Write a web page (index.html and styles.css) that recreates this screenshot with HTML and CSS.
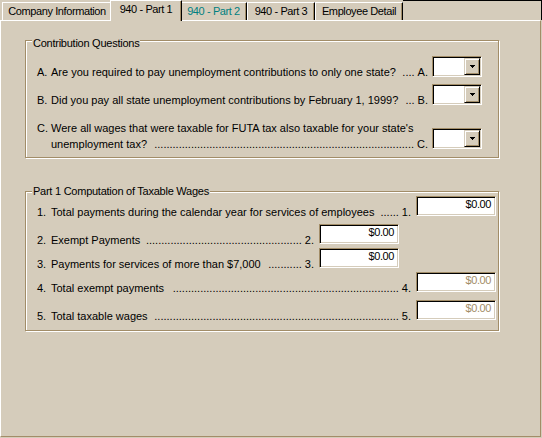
FILE: index.html
```html
<!DOCTYPE html>
<html>
<head>
<meta charset="utf-8">
<link rel="stylesheet" href="styles.css">
</head>
<body>
<div class="window">
  <div class="tabs">
    <div class="tab w1">Company Information</div>
    <div class="tab sel w2">940 - Part 1</div>
    <div class="tab hot w3">940 - Part 2</div>
    <div class="tab w4">940 - Part 3</div>
    <div class="tab w5">Employee Detail</div>
    <div class="filler"></div>
  </div>
  <div class="panel">
    <div class="group g1">
      <div class="legend">Contribution Questions</div>
      <div class="row ra">
        <span class="num t">A.</span>
        <div class="q t"><span>Are you required to pay unemployment contributions to only one state?</span><span class="lead"><span>....</span></span></div>
        <span class="let t">A.</span>
        <div class="combo"><div class="field"></div><div class="btn"><svg width="5" height="3" viewBox="0 0 5 3"><rect x="0" y="0" width="5" height="1"/><rect x="1" y="1" width="3" height="1"/><rect x="2" y="2" width="1" height="1"/></svg></div></div>
      </div>
      <div class="row rb">
        <span class="num t">B.</span>
        <div class="q t"><span>Did you pay all state unemployment contributions by February 1, 1999?</span><span class="lead"><span>...</span></span></div>
        <span class="let t">B.</span>
        <div class="combo"><div class="field"></div><div class="btn"><svg width="5" height="3" viewBox="0 0 5 3"><rect x="0" y="0" width="5" height="1"/><rect x="1" y="1" width="3" height="1"/><rect x="2" y="2" width="1" height="1"/></svg></div></div>
      </div>
      <div class="row rc">
        <span class="num t top">C.</span>
        <div class="q t col">
          <div>Were all wages that were taxable for FUTA tax also taxable for your state's</div>
          <div class="line"><span>unemployment tax?</span><span class="lead"><span>.....................................................................................</span></span></div>
        </div>
        <span class="let t">C.</span>
        <div class="combo"><div class="field"></div><div class="btn"><svg width="5" height="3" viewBox="0 0 5 3"><rect x="0" y="0" width="5" height="1"/><rect x="1" y="1" width="3" height="1"/><rect x="2" y="2" width="1" height="1"/></svg></div></div>
      </div>
    </div>

    <div class="group g2">
      <div class="legend">Part 1 Computation of Taxable Wages</div>
      <div class="row r1">
        <span class="num t">1.</span>
        <div class="q t"><span>Total payments during the calendar year for services of employees</span><span class="lead"><span>......</span></span></div>
        <span class="let t">1.</span>
        <div class="edit">$0.00</div>
      </div>
      <div class="row r2 short">
        <span class="num t">2.</span>
        <div class="q t"><span>Exempt Payments</span><span class="lead"><span>...................................................</span></span></div>
        <span class="let t">2.</span>
        <div class="edit">$0.00</div>
      </div>
      <div class="row r3 short">
        <span class="num t">3.</span>
        <div class="q t"><span>Payments for services of more than $7,000</span><span class="lead"><span>...........</span></span></div>
        <span class="let t">3.</span>
        <div class="edit">$0.00</div>
      </div>
      <div class="row r4">
        <span class="num t">4.</span>
        <div class="q t"><span>Total exempt payments</span><span class="lead"><span>..........................................................................</span></span></div>
        <span class="let t">4.</span>
        <div class="edit disabled">$0.00</div>
      </div>
      <div class="row r5">
        <span class="num t">5.</span>
        <div class="q t"><span>Total taxable wages</span><span class="lead"><span>................................................................................</span></span></div>
        <span class="let t">5.</span>
        <div class="edit disabled">$0.00</div>
      </div>
    </div>
  </div>
</div>
</body>
</html>
```

FILE: styles.css
```css
html, body {
  margin: 0;
  padding: 0;
}
body {
  width: 542px;
  height: 438px;
  overflow: hidden;
  background: #D5CCBB;
  font-family: "Liberation Sans", Arial, sans-serif;
  font-size: 11px;
  line-height: 13px;
  color: #000;
}
.window {
  display: flex;
  flex-direction: column;
  width: 542px;
  height: 438px;
}

/* tabs */
.tabs {
  display: flex;
  align-items: flex-end;
  height: 20px;
  padding-left: 2px;
  flex: none;
}
.tab {
  box-sizing: border-box;
  height: 18px;
  padding-top: 2px;
  text-align: center;
  white-space: nowrap;
  letter-spacing: -0.4px;
  border-top: 1px solid #fff;
  border-left: 1px solid #fff;
  border-right: 1px solid #000;
  box-shadow: inset -1px 0 0 #A28D68;
  flex: none;
}
.tab.sel {
  position: relative;
  z-index: 1;
  height: 21px;
  margin: 0 -2px -1px -2px;
  background: #D5CCBB;
}
.tab.hot { color: #008080; }
.w1 { width: 110px; }
.w2 { width: 72px; }
.w3 { width: 67px; }
.w4 { width: 68px; }
.w5 { width: 88px; }
.filler {
  flex: 1;
  align-self: flex-start;
  height: 20px;
  box-sizing: border-box;
  border-top: 1px solid #000;
  border-right: 1px solid #000;
}

/* panel */
.panel {
  flex: 1;
  margin: 0 1px 1px 0;
  border-top: 1px solid #fff;
  border-left: 1px solid #fff;
  border-right: 1px solid #A28D68;
  border-bottom: 1px solid #A28D68;
}

/* group boxes */
.group {
  box-sizing: border-box;
  width: 474px;
  margin-left: 24px;
  border: 1px solid #A28D68;
  box-shadow: inset 1px 1px 0 #fff, 1px 1px 0 #fff;
}
.g1 {
  margin-top: 19px;
  padding: 0 16px 8px 11px;
}
.g2 {
  margin-top: 33px;
  padding: 0 2px 10px 11px;
}
.legend {
  width: max-content;
  background: #D5CCBB;
  padding: 0 1px;
  margin-left: -5px;
  height: 13px;
  letter-spacing: -0.25px;
}
.g1 .legend { margin-top: -4px; }
.g2 .legend { margin-top: -7px; margin-bottom: -2px; }

/* rows */
.row {
  display: flex;
  align-items: flex-end;
}
.t {
  line-height: 16px;
}
.g1 .t { margin-bottom: -3px; }
.g2 .t { margin-bottom: -4px; }
.num {
  width: 14px;
  flex: none;
}
.top { align-self: flex-start; }
.q {
  flex: 1;
  min-width: 0;
  display: flex;
  white-space: nowrap;
}
.q.col { flex-direction: column; }
.line { display: flex; }
.lead {
  flex: 1;
  min-width: 0;
  overflow: hidden;
  display: flex;
  justify-content: flex-end;
  margin-left: 4px;
}
.let {
  flex: none;
  margin-left: 3px;
  margin-right: 4px;
}
.g2 .let { margin-right: 5px; }

.ra { margin-top: 6px; }
.rb { margin-top: 7px; }
.rc { margin-top: 15px; }
.r2 { margin-top: 8px; }
.r3 { margin-top: 4px; }
.r4 { margin-top: 4px; }
.r5 { margin-top: 8px; }
.short { margin-right: 97px; }

/* combo box */
.combo {
  box-sizing: border-box;
  width: 50px;
  height: 21px;
  flex: none;
  display: flex;
  padding: 1px;
  background: #fff;
  border: 1px solid;
  border-color: #A28D68 #fff #fff #A28D68;
  box-shadow: inset 1px 1px 0 #000, inset -1px -1px 0 #D5CCBB;
}
.field { flex: 1; }
.btn {
  box-sizing: border-box;
  width: 16px;
  height: 17px;
  flex: none;
  display: flex;
  align-items: center;
  justify-content: center;
  background: #D5CCBB;
  border: 1px solid;
  border-color: #D5CCBB #000 #000 #D5CCBB;
  box-shadow: inset 1px 1px 0 #fff, inset -1px -1px 0 #A28D68;
}
.btn svg { display: block; fill: #000; }

/* edit boxes */
.edit {
  box-sizing: border-box;
  width: 80px;
  height: 20px;
  flex: none;
  padding: 1px 4px 0 0;
  text-align: right;
  line-height: 13px;
  letter-spacing: -0.4px;
  background: #fff;
  border: 1px solid;
  border-color: #A28D68 #fff #fff #A28D68;
  box-shadow: inset 1px 1px 0 #000, inset -1px -1px 0 #D5CCBB;
}
.edit.disabled { color: #A28D68; }
```
